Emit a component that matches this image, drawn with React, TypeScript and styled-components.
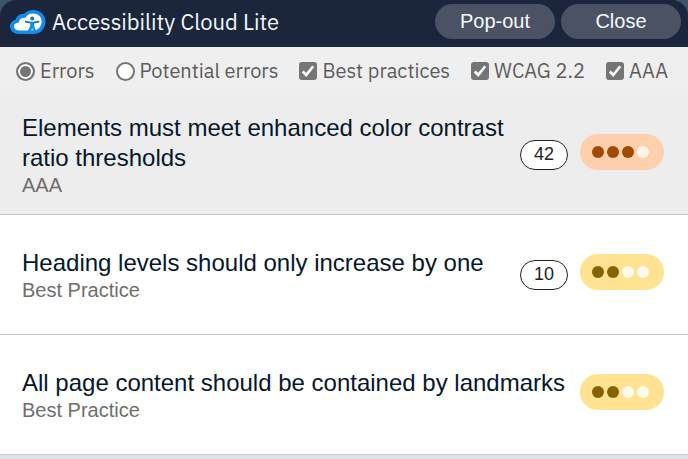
import React from "react";
import styled, { createGlobalStyle } from "styled-components";

const GlobalStyle = createGlobalStyle`
  * { box-sizing: border-box; }
  body {
    margin: 0;
    background: #dde3e9;
    font-family: "Liberation Sans", Arial, sans-serif;
    color: #06162b;
  }
`;

const Backdrop = styled.div`
  background: #3a5568;
`;

const Header = styled.header`
  display: flex;
  align-items: center;
  gap: 6px;
  height: 47px;
  padding: 0 7px 4px 10px;
  border-radius: 16px 16px 0 0;
  background: #1b263d;
`;

const Logo = styled.svg`
  flex: none;
  width: 36px;
  height: 26px;
`;

const Title = styled.h1`
  flex: 1;
  margin: 0;
  font-family: "IBM Plex Sans", "Inter", sans-serif;
  font-size: 22px;
  font-weight: 400;
  line-height: 28px;
  color: #f4f8ff;
  white-space: nowrap;
`;

const HeaderButton = styled.button`
  width: 120px;
  height: 35px;
  padding: 0 0 2px;
  border: 0;
  border-radius: 18px;
  background: #4a5264;
  color: #f7f9ff;
  font-family: inherit;
  font-size: 20px;
  line-height: 24px;
`;

const ButtonGroup = styled.div`
  display: flex;
  gap: 6px;
`;

const Filters = styled.form`
  display: flex;
  align-items: center;
  gap: 21px;
  height: 48px;
  padding: 0 16px;
  background: #efefef;
`;

const FilterLabel = styled.label`
  display: flex;
  align-items: center;
  gap: 5px;
  font-family: "IBM Plex Sans", "Inter", sans-serif;
  font-size: 20px;
  line-height: 24px;
  color: #5c5c5c;
  white-space: nowrap;
`;

const Radio = styled.input`
  appearance: none;
  flex: none;
  width: 19px;
  height: 19px;
  margin: 0;
  border: 2px solid #757575;
  border-radius: 50%;
  background: #fff;
  &:checked {
    background: #757575;
    box-shadow: inset 0 0 0 2px #fff;
  }
`;

const CheckBox = styled.span`
  display: grid;
  flex: none;
  width: 18px;
  height: 18px;
  > * { grid-area: 1 / 1; }
`;

const CheckInput = styled.input`
  appearance: none;
  width: 18px;
  height: 18px;
  margin: 0;
  border: 2px solid #757575;
  border-radius: 3px;
  background: #fff;
  &:checked { background: #757575; }
  & + svg { visibility: hidden; }
  &:checked + svg { visibility: visible; }
`;

const CheckMark = styled.svg`
  width: 18px;
  height: 18px;
  pointer-events: none;
`;

const IssueList = styled.ul`
  margin: 0;
  padding: 0;
  list-style: none;
`;

const IssueRow = styled.li<{ $active?: boolean }>`
  display: flex;
  align-items: center;
  justify-content: space-between;
  gap: 12px;
  min-height: 120px;
  padding: 0 24px 0 22px;
  border-bottom: 1px solid #c9c9c9;
  background: ${(p) => (p.$active ? "#ededed" : "#fff")};
`;

const IssueTitle = styled.h2`
  margin: 0;
  font-size: 24px;
  font-weight: 400;
  line-height: 30px;
`;

const IssueTag = styled.p`
  margin: 0;
  font-size: 20px;
  line-height: 24px;
  color: #6e6e6e;
`;

const IssueStats = styled.div`
  display: flex;
  flex: none;
  align-items: flex-end;
  gap: 12px;
  padding-bottom: 5px;
`;

const Count = styled.span`
  width: 48px;
  height: 30px;
  border: 1px solid #222;
  border-radius: 15px;
  background: #fff;
  color: #222;
  font-size: 18px;
  line-height: 27px;
  text-align: center;
`;

type Tone = "orange" | "yellow";
const tones = {
  orange: { pill: "#ffd0ae", on: "#a04a00", off: "#fff3ea" },
  yellow: { pill: "#ffe392", on: "#856200", off: "#fffaea" },
};

const Severity = styled.div<{ $tone: Tone }>`
  display: flex;
  align-items: center;
  gap: 3px;
  width: 84px;
  height: 36px;
  padding-left: 12px;
  border-radius: 18px;
  background: ${(p) => tones[p.$tone].pill};
`;

const Dot = styled.span<{ $tone: Tone; $on: boolean }>`
  width: 12px;
  height: 12px;
  border-radius: 50%;
  background: ${(p) => (p.$on ? tones[p.$tone].on : tones[p.$tone].off)};
`;

const issues: { title: string; tag: string; count?: number; level: number; tone: Tone }[] = [
  { title: "Elements must meet enhanced color contrast ratio thresholds", tag: "AAA", count: 42, level: 3, tone: "orange" },
  { title: "Heading levels should only increase by one", tag: "Best Practice", count: 10, level: 2, tone: "yellow" },
  { title: "All page content should be contained by landmarks", tag: "Best Practice", level: 2, tone: "yellow" },
];

function CloudLogo() {
  return (
    <Logo viewBox="0 0 36 26" aria-hidden="true">
      <path
        d="M9 25C3 25 0 21.5 0 17.6C0 14 2.6 11.4 5.8 10.6C6.6 6.4 10.4 4.6 14 5C16.2 2.4 19.4 1 23.2 1C30 1 35.4 5.8 35.4 12.4C35.4 19.4 30.4 25 24 25Z"
        fill="#118ee9"
      />
      <path
        d="M9.4 21.4C6 21.4 4 19.7 4 17.4C4 14.8 6.2 13.6 9 13.8C8.8 10.2 11.6 8.4 15.2 9C17.2 6 19.8 4.6 23 4.6C28 4.6 31.6 7.8 31.6 12.6C31.6 17.6 28.2 21.4 24 21.4Z"
        fill="#fff"
      />
      <circle cx="22.2" cy="9.6" r="2" fill="#1672ba" />
      <path d="M15.8 12.6Q22.2 14.6 28.6 12.6" stroke="#1672ba" strokeWidth="1.9" strokeLinecap="round" fill="none" />
      <path d="M20.2 13.4H24.2V17L26 22H23.2L22.2 19L21.2 22H17.8L20.2 17Z" fill="#118ee9" />
    </Logo>
  );
}

function Check({ label }: { label: string }) {
  return (
    <FilterLabel>
      <CheckBox>
        <CheckInput type="checkbox" defaultChecked />
        <CheckMark viewBox="0 0 18 18" aria-hidden="true">
          <path d="M3.8 9.5L7.2 13L14.2 4.2" fill="none" stroke="#fff" strokeWidth="2.6" />
        </CheckMark>
      </CheckBox>
      {label}
    </FilterLabel>
  );
}

export default function App() {
  return (
    <>
      <GlobalStyle />
      <Backdrop>
        <Header>
          <CloudLogo />
          <Title>Accessibility Cloud Lite</Title>
          <ButtonGroup>
            <HeaderButton type="button">Pop-out</HeaderButton>
            <HeaderButton type="button">Close</HeaderButton>
          </ButtonGroup>
        </Header>
      </Backdrop>
      <Filters>
        <FilterLabel>
          <Radio type="radio" name="kind" defaultChecked />
          Errors
        </FilterLabel>
        <FilterLabel>
          <Radio type="radio" name="kind" />
          Potential errors
        </FilterLabel>
        <Check label="Best practices" />
        <Check label="WCAG 2.2" />
        <Check label="AAA" />
      </Filters>
      <IssueList>
        {issues.map((issue, i) => (
          <IssueRow key={issue.title} $active={i === 0}>
            <div>
              <IssueTitle>{issue.title}</IssueTitle>
              <IssueTag>{issue.tag}</IssueTag>
            </div>
            <IssueStats>
              {issue.count !== undefined && <Count>{issue.count}</Count>}
              <Severity $tone={issue.tone} role="img" aria-label={`Severity ${issue.level} of 4`}>
                {[1, 2, 3, 4].map((n) => (
                  <Dot key={n} $tone={issue.tone} $on={n <= issue.level} />
                ))}
              </Severity>
            </IssueStats>
          </IssueRow>
        ))}
      </IssueList>
    </>
  );
}
